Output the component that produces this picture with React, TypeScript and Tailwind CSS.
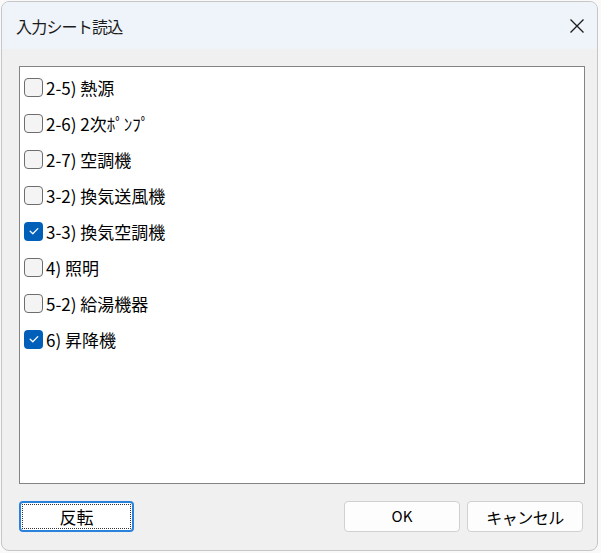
import React from "react";

const items: { label: string; checked: boolean }[] = [
  { label: "2-5) 熱源", checked: false },
  { label: "2-6) 2次ﾎﾟﾝﾌﾟ", checked: false },
  { label: "2-7) 空調機", checked: false },
  { label: "3-2) 換気送風機", checked: false },
  { label: "3-3) 換気空調機", checked: true },
  { label: "4) 照明", checked: false },
  { label: "5-2) 給湯機器", checked: false },
  { label: "6) 昇降機", checked: true },
];

function Box({ checked }: { checked: boolean }) {
  if (checked) {
    return (
      <div className="w-[19px] h-[19px] rounded-[4px] bg-[#005fb8] flex items-center justify-center shrink-0">
        <svg width="12" height="12" viewBox="0 0 12 12" fill="none">
          <path d="M2.2 6.3 L4.8 8.8 L9.8 3.6" stroke="white" strokeWidth="1.3" strokeLinecap="round" strokeLinejoin="round" />
        </svg>
      </div>
    );
  }
  return <div className="w-[19px] h-[19px] rounded-[4px] border border-[#6e6e6e] bg-[#f4f4f4] shrink-0" />;
}

export default function App() {
  const font = { fontFamily: '"Noto Sans CJK JP", "Noto Sans", sans-serif' };
  return (
    <div className="w-[601px] h-[553px] bg-[#f9f9f9] pt-[1px] pl-[1px]" style={font}>
      <div className="w-[597px] h-[550px] rounded-[8px] border border-[#c6c6c6] overflow-hidden flex flex-col bg-[#f0f0f0]">
        <div className="h-[47px] bg-[#eff4fa] flex items-center justify-between pl-[14px] pr-[12px] shrink-0">
          <span className="text-[16px] text-[#1b1b1b] tracking-[-0.8px]">入力シート読込</span>
          <svg width="16" height="16" viewBox="0 0 16 16">
            <path d="M1.5 1.5 L14.5 14.5 M14.5 1.5 L1.5 14.5" stroke="#1b1b1b" strokeWidth="1.3" />
          </svg>
        </div>
        <div className="flex-1 flex flex-col pl-[17px] pt-[17px]">
          <div className="w-[566px] h-[418px] bg-white border border-[#848484] pt-[2px] pl-[4px] flex flex-col">
            {items.map((it) => (
              <div key={it.label} className="h-[36px] flex items-center gap-[3px]">
                <Box checked={it.checked} />
                <span className="text-[17px] leading-none text-black font-normal">{it.label}</span>
              </div>
            ))}
          </div>
          <div className="w-[564px] mt-[17px] flex items-center">
            <button className="w-[115px] h-[31px] rounded-[4px] border-2 border-[#2a82da] bg-white p-[1px]">
              <div className="w-full h-full border border-dotted border-[#333] flex items-center justify-center text-[17px] text-black">
                反転
              </div>
            </button>
            <div className="flex-1" />
            <button className="w-[116px] h-[31px] rounded-[4px] border border-[#d0d0d0] bg-[#fdfdfd] flex items-center justify-center text-[15px] text-black">
              OK
            </button>
            <button className="ml-[7px] w-[116px] h-[31px] rounded-[4px] border border-[#d0d0d0] bg-[#fdfdfd] flex items-center justify-center text-[16px] text-black tracking-[-0.5px]">
              キャンセル
            </button>
          </div>
        </div>
      </div>
    </div>
  );
}
